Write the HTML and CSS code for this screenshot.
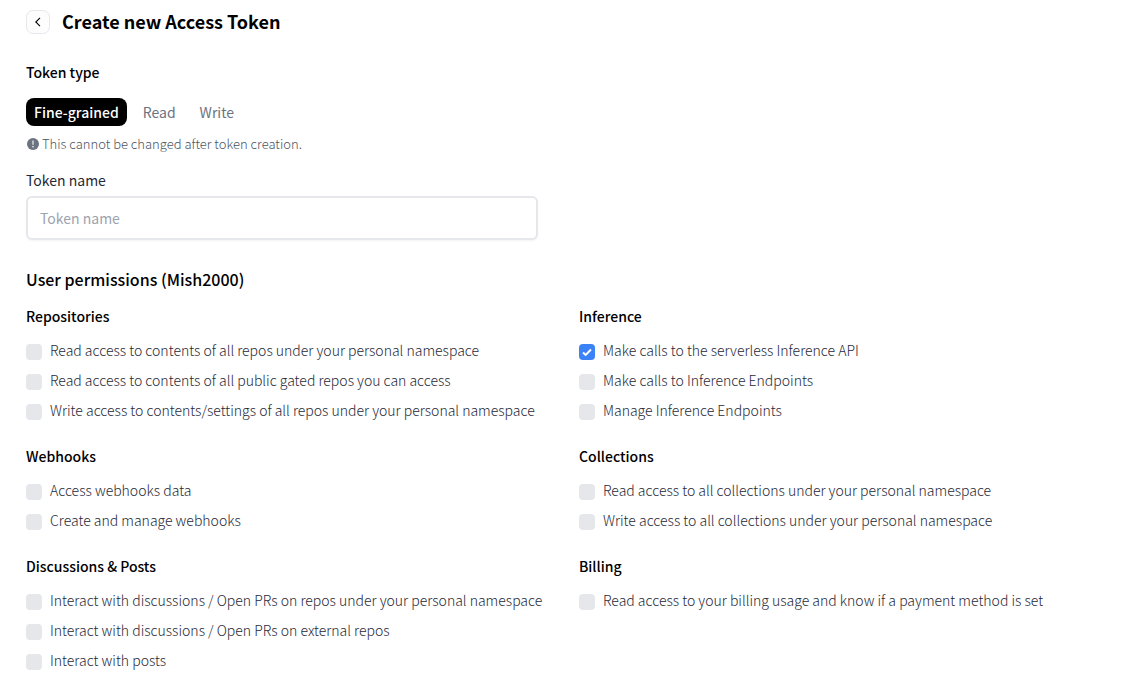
FILE: index.html
```html
<!DOCTYPE html>
<html lang="en">
<head>
<meta charset="utf-8">
<meta name="viewport" content="width=device-width, initial-scale=1">
<title>Create new Access Token</title>
<link rel="stylesheet" href="styles.css">
</head>
<body>
<main class="page">
  <header class="page-header">
    <button class="back" type="button" aria-label="Back">
      <svg width="12" height="12" viewBox="0 0 12 12" fill="none" stroke="currentColor" stroke-width="1.1"><path d="M8 1.8 3.8 6 8 10.2"/></svg>
    </button>
    <h1 class="title">Create new Access Token</h1>
  </header>

  <form class="form">
    <section class="token-type">
      <h2 class="subheading">Token type</h2>
      <div class="tabs">
        <button class="tab tab-active" type="button" aria-pressed="true">Fine-grained</button>
        <button class="tab" type="button" aria-pressed="false">Read</button>
        <button class="tab" type="button" aria-pressed="false">Write</button>
      </div>
      <p class="note">
        <svg class="note-icon" width="14" height="14" viewBox="0 0 14 14"><circle cx="7" cy="7" r="6" fill="#6b7280"/><path d="M7 3.4v4.4" stroke="#fff" stroke-width="1.1"/><circle cx="7" cy="9.8" r=".8" fill="#fff"/></svg>
        This cannot be changed after token creation.
      </p>
    </section>

    <div class="field">
      <label class="field-label" for="token-name">Token name</label>
      <input class="field-input" id="token-name" type="text" placeholder="Token name">
    </div>

    <section class="permissions">
      <h2 class="permissions-title">User permissions (Mish2000)</h2>
      <div class="groups">
        <section class="group">
          <h3 class="subheading">Repositories</h3>
          <div class="options">
            <label class="option"><input class="check" type="checkbox"><span>Read access to contents of all repos under your personal namespace</span></label>
            <label class="option"><input class="check" type="checkbox"><span>Read access to contents of all public gated repos you can access</span></label>
            <label class="option"><input class="check" type="checkbox"><span>Write access to contents/settings of all repos under your personal namespace</span></label>
          </div>
        </section>
        <section class="group">
          <h3 class="subheading">Inference</h3>
          <div class="options">
            <label class="option"><input class="check" type="checkbox" checked><span>Make calls to the serverless Inference API</span></label>
            <label class="option"><input class="check" type="checkbox"><span>Make calls to Inference Endpoints</span></label>
            <label class="option"><input class="check" type="checkbox"><span>Manage Inference Endpoints</span></label>
          </div>
        </section>
        <section class="group">
          <h3 class="subheading">Webhooks</h3>
          <div class="options">
            <label class="option"><input class="check" type="checkbox"><span>Access webhooks data</span></label>
            <label class="option"><input class="check" type="checkbox"><span>Create and manage webhooks</span></label>
          </div>
        </section>
        <section class="group">
          <h3 class="subheading">Collections</h3>
          <div class="options">
            <label class="option"><input class="check" type="checkbox"><span>Read access to all collections under your personal namespace</span></label>
            <label class="option"><input class="check" type="checkbox"><span>Write access to all collections under your personal namespace</span></label>
          </div>
        </section>
        <section class="group">
          <h3 class="subheading">Discussions &amp; Posts</h3>
          <div class="options">
            <label class="option"><input class="check" type="checkbox"><span>Interact with discussions / Open PRs on repos under your personal namespace</span></label>
            <label class="option"><input class="check" type="checkbox"><span>Interact with discussions / Open PRs on external repos</span></label>
            <label class="option"><input class="check" type="checkbox"><span>Interact with posts</span></label>
          </div>
        </section>
        <section class="group">
          <h3 class="subheading">Billing</h3>
          <div class="options">
            <label class="option"><input class="check" type="checkbox"><span>Read access to your billing usage and know if a payment method is set</span></label>
          </div>
        </section>
      </div>
    </section>
  </form>
</main>
</body>
</html>
```

FILE: styles.css
```css
*, *::before, *::after { box-sizing: border-box; }

body {
  margin: 0;
  background: #fff;
  color: #000;
  font-family: "Noto Sans CJK SC", "Noto Sans", sans-serif;
  font-size: 14px;
  line-height: 24px;
}

h1, h2, h3, p { margin: 0; }

button, input { font: inherit; }

.page { padding: 10px 18px 16px 26px; }

.page-header {
  display: flex;
  align-items: flex-start;
  gap: 12px;
  margin-bottom: 26px;
}

.back {
  display: flex;
  align-items: center;
  justify-content: center;
  width: 24px;
  height: 24px;
  padding: 0;
  border: 1px solid #e5e7eb;
  border-radius: 7px;
  background: #fdfdfe;
  color: #000;
}

.title {
  font-size: 18px;
  font-weight: 700;
  line-height: 22px;
}

.subheading {
  font-size: 14px;
  font-weight: 500;
  line-height: 24px;
}

.tabs {
  display: flex;
  gap: 8px;
  margin: 14px 0 7px;
}

.tab {
  height: 28px;
  padding: 0 8px;
  border: 0;
  border-radius: 8px;
  background: transparent;
  color: #6b7280;
  line-height: 28px;
}

.tab-active {
  background: #000;
  color: #fff;
  font-weight: 500;
}

.note {
  display: flex;
  align-items: center;
  gap: 2px;
  color: #4b5563;
  font-size: 13px;
  font-weight: 300;
  line-height: 22px;
}

.field {
  display: flex;
  flex-direction: column;
  max-width: 512px;
  margin: 13px 0 27px;
}

.field-label {
  margin-bottom: 4px;
  color: #1f2937;
}

.field-input {
  width: 100%;
  height: 44px;
  padding: 0 12px;
  border: 2px solid #e5e7eb;
  border-radius: 6px;
  background: #fff;
  box-shadow: 0 1px 2px rgba(0, 0, 0, 0.05);
  color: #000;
}

.field-input::placeholder { color: #9ca3af; opacity: 1; }

.permissions-title {
  margin-bottom: 13px;
  font-size: 16px;
  font-weight: 500;
  line-height: 24px;
}

.groups {
  display: grid;
  grid-template-columns: 1fr 1fr;
  gap: 24px;
}

.options {
  display: flex;
  flex-direction: column;
  gap: 10px;
  margin-top: 12px;
}

.option {
  display: flex;
  align-items: flex-end;
  gap: 8px;
  color: #1f2937;
  font-size: 14px;
  font-weight: 300;
  line-height: 20px;
}

.check {
  flex: none;
  width: 16px;
  height: 16px;
  margin: 0;
  appearance: none;
  border-radius: 4px;
  background: #e5e7eb;
}

.check:checked {
  background: #3b82f6 url("data:image/svg+xml,%3Csvg xmlns='http://www.w3.org/2000/svg' viewBox='0 0 16 16'%3E%3Cpath d='M4 8.4 6.7 10.9 12 5.5' fill='none' stroke='white' stroke-width='2'/%3E%3C/svg%3E") center / 16px no-repeat;
}
```
